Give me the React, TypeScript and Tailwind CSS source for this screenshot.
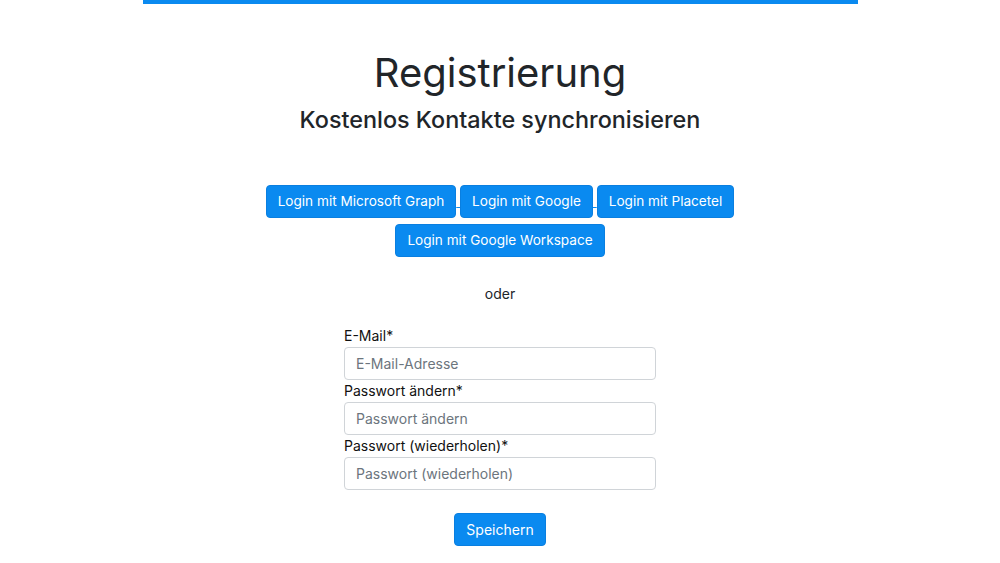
import React from 'react';

const font = { fontFamily: 'Inter, "Noto Sans", sans-serif' };

const btn =
  'inline-block h-[33px] px-[11px] leading-[31px] rounded-[4px] border border-[#0a7fe0] bg-[#0a8af0] text-white text-[13.6px] no-underline mb-[6px]';

const Field: React.FC<{ label: string; placeholder: string; type?: string }> = ({ label, placeholder, type = 'text' }) => (
  <div className="flex flex-col">
    <label className="text-[14px] leading-[22px] text-[#111]">{label}</label>
    <input
      type={type}
      placeholder={placeholder}
      className="h-[33px] px-[11px] rounded-[4px] border border-[#d0d4d8] bg-white text-[14px] text-[#495057] placeholder:text-[#6c757d] outline-none"
    />
  </div>
);

export default function App() {
  return (
    <div className="w-full min-h-[563px] bg-white text-[#212529]" style={font}>
      <div className="mx-auto w-[715px] h-[4px] bg-[#0a8af0]" />

      <div className="flex flex-col items-center">
        <h1 className="mt-[44px] text-[40px] leading-[50px] font-normal">Registrierung</h1>
        <h3 className="mt-[7px] text-[23.4px] leading-[30px] font-medium">Kostenlos Kontakte synchronisieren</h3>

        {/* buttons are links; the spaces between them carry the link underline */}
        <div className="mt-[50px] w-[520px] text-center text-[13.6px] leading-[20px] underline decoration-[#0a8af0]">
          <a className={btn}>Login mit Microsoft Graph</a> <a className={btn}>Login mit Google</a>{' '}
          <a className={btn}>Login mit Placetel</a> <a className={btn}>Login mit Google Workspace</a>
        </div>

        <div className="mt-[20px] text-[14px] leading-[22px]">oder</div>

        <form className="mt-[20px] w-[312px] flex flex-col">
          <Field label="E-Mail*" placeholder="E-Mail-Adresse" type="email" />
          <Field label="Passwort ändern*" placeholder="Passwort ändern" type="password" />
          <Field label="Passwort (wiederholen)*" placeholder="Passwort (wiederholen)" type="password" />
          <div className="mt-[23px] flex justify-center">
            <button
              type="button"
              className="h-[33px] px-[11px] rounded-[4px] border border-[#0a7fe0] bg-[#0a8af0] text-white text-[14px] leading-none"
            >
              Speichern
            </button>
          </div>
        </form>
      </div>
    </div>
  );
}
